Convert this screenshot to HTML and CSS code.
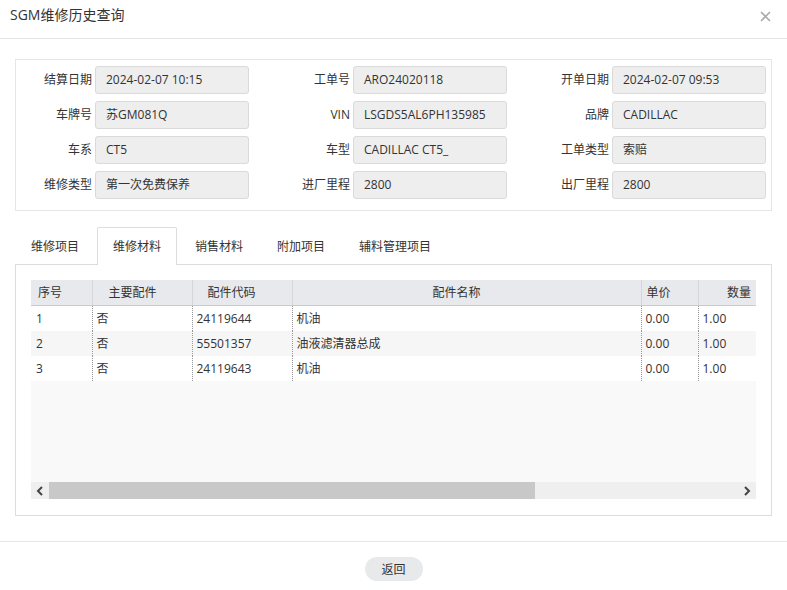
FILE: index.html
```html
<!DOCTYPE html>
<html>
  <head>
    <meta charset="utf-8" />
    <title>SGM维修历史查询</title>
    <link rel="stylesheet" href="styles.css">
  </head>
  <body>
    <div class="dialog">
      <div class="dialog-head">
        <span class="dialog-title">SGM维修历史查询</span>
        <span class="dialog-close">
          <svg width="11" height="11" viewBox="0 0 11 11"><path d="M1 1L10 10M10 1L1 10" stroke="#aaa" stroke-width="1.6" fill="none"/></svg>
        </span>
      </div>

      <div class="dialog-body">
        <div class="info-panel">
          <label>结算日期</label><div class="field">2024-02-07 10:15</div>
          <label>工单号</label><div class="field">ARO24020118</div>
          <label>开单日期</label><div class="field">2024-02-07 09:53</div>

          <label>车牌号</label><div class="field">苏GM081Q</div>
          <label>VIN</label><div class="field">LSGDS5AL6PH135985</div>
          <label>品牌</label><div class="field">CADILLAC</div>

          <label>车系</label><div class="field">CT5</div>
          <label>车型</label><div class="field">CADILLAC CT5_</div>
          <label>工单类型</label><div class="field">索赔</div>

          <label>维修类型</label><div class="field">第一次免费保养</div>
          <label>进厂里程</label><div class="field">2800</div>
          <label>出厂里程</label><div class="field">2800</div>
        </div>

        <ul class="tabs">
          <li>维修项目</li>
          <li class="active">维修材料</li>
          <li>销售材料</li>
          <li>附加项目</li>
          <li>辅料管理项目</li>
        </ul>

        <div class="tab-panel">
          <div class="grid">
            <div class="grid-view">
              <table>
                <colgroup>
                  <col style="width:61px"><col style="width:100px"><col style="width:100px">
                  <col style="width:349px"><col style="width:57px"><col style="width:58px">
                </colgroup>
                <thead>
                  <tr>
                    <th class="h-no">序号</th>
                    <th class="h-main">主要配件</th>
                    <th class="h-code">配件代码</th>
                    <th class="h-name">配件名称</th>
                    <th class="h-price">单价</th>
                    <th class="h-qty">数量</th>
                  </tr>
                </thead>
                <tbody>
                  <tr><td>1</td><td>否</td><td>24119644</td><td>机油</td><td>0.00</td><td>1.00</td></tr>
                  <tr class="alt"><td>2</td><td>否</td><td>55501357</td><td>油液滤清器总成</td><td>0.00</td><td>1.00</td></tr>
                  <tr><td>3</td><td>否</td><td>24119643</td><td>机油</td><td>0.00</td><td>1.00</td></tr>
                </tbody>
              </table>
            </div>
            <div class="hscroll">
              <span class="arrow">
                <svg width="8" height="10" viewBox="0 0 8 10"><path d="M6 1L2 5L6 9" stroke="#444" stroke-width="2" fill="none"/></svg>
              </span>
              <span class="thumb"></span>
              <span class="track"></span>
              <span class="arrow">
                <svg width="8" height="10" viewBox="0 0 8 10"><path d="M2 1L6 5L2 9" stroke="#444" stroke-width="2" fill="none"/></svg>
              </span>
            </div>
          </div>
        </div>
      </div>

      <div class="dialog-foot">
        <button class="btn-back">返回</button>
      </div>
    </div>
  </body>
</html>
```

FILE: styles.css
```css
html, body {
  margin:0;
  padding:0;
  background-color:#fff;
  font-family:"Open Sans", "Noto Sans CJK SC", sans-serif;
  font-size:12px;
  color:#333;
}

.dialog-head {
  height:39px;
  box-sizing:border-box;
  padding:5px 10px 0 10px;
  border-bottom:1px solid #e5e5e5;
  display:flex;
  justify-content:space-between;
}

.dialog-title {
  font-size:14px;
  line-height:20px;
  color:#333;
}

.dialog-close {
  padding:4px 6px 0 0;
}

.dialog-body {
  padding:20px 15px 25px 15px;
}

.info-panel {
  border:1px solid #e6e6e6;
  padding:6px 5px 11px 0;
  display:grid;
  grid-template-columns:76px 154px 98px 154px 99px 154px;
  column-gap:3px;
  row-gap:7px;
}

.info-panel label {
  text-align:right;
  line-height:28px;
  white-space:nowrap;
}

.field {
  height:28px;
  box-sizing:border-box;
  border:1px solid #dadada;
  border-radius:3px;
  background-color:#eeeeee;
  padding-left:10px;
  line-height:26px;
  white-space:nowrap;
  overflow:hidden;
}

.tabs {
  list-style:none;
  margin:16px 0 0 0;
  padding:0;
  display:flex;
  height:37px;
}

.tabs li {
  padding:0 15px;
  margin-right:2px;
  line-height:37px;
  border:1px solid transparent;
  border-bottom:none;
  box-sizing:border-box;
  height:38px;
}

.tabs li.active {
  border-color:#ddd;
  background-color:#fff;
  border-radius:2px 2px 0 0;
  position:relative;
  z-index:1;
}

.tab-panel {
  border:1px solid #ddd;
  padding:15px 15px 16px 15px;
}

.grid-view {
  height:202px;
  background-color:#f9f9f9;
  overflow:hidden;
}

table {
  border-collapse:collapse;
  table-layout:fixed;
  width:725px;
}

th {
  height:25px;
  box-sizing:border-box;
  background-color:#e7e9ec;
  font-weight:normal;
  text-align:left;
  padding:0;
  border-right:1px solid #d4d6d9;
  border-bottom:1px solid #c9cbce;
  white-space:nowrap;
}

th:last-child {
  border-right:none;
}

th.h-no { padding-left:7px; }
th.h-main { padding-left:16px; }
th.h-code { padding-left:15px; }
th.h-name { padding-left:140px; }
th.h-price { padding-left:5px; }
th.h-qty { text-align:right; padding-right:5px; }

td {
  height:25px;
  padding:0 0 0 4px;
  background-color:#fff;
  border-right:1px dotted #999;
  white-space:nowrap;
  overflow:hidden;
}

td:first-child {
  padding-left:5px;
}

td:last-child {
  border-right:none;
}

tr.alt td {
  background-color:#f6f6f6;
}

.hscroll {
  display:flex;
  height:17px;
  background-color:#efefef;
}

.hscroll .arrow {
  width:18px;
  display:flex;
  align-items:center;
  justify-content:center;
}

.hscroll .thumb {
  width:486px;
  background-color:#c8c8c8;
}

.hscroll .track {
  flex:1;
}

.dialog-foot {
  border-top:1px solid #e5e5e5;
  padding-top:15px;
  text-align:center;
}

.btn-back {
  width:58px;
  height:24px;
  border:none;
  border-radius:12px;
  background-color:#e8e9eb;
  font-family:"Open Sans", "Noto Sans CJK SC", sans-serif;
  font-size:12px;
  color:#333;
  padding:0;
}
```
